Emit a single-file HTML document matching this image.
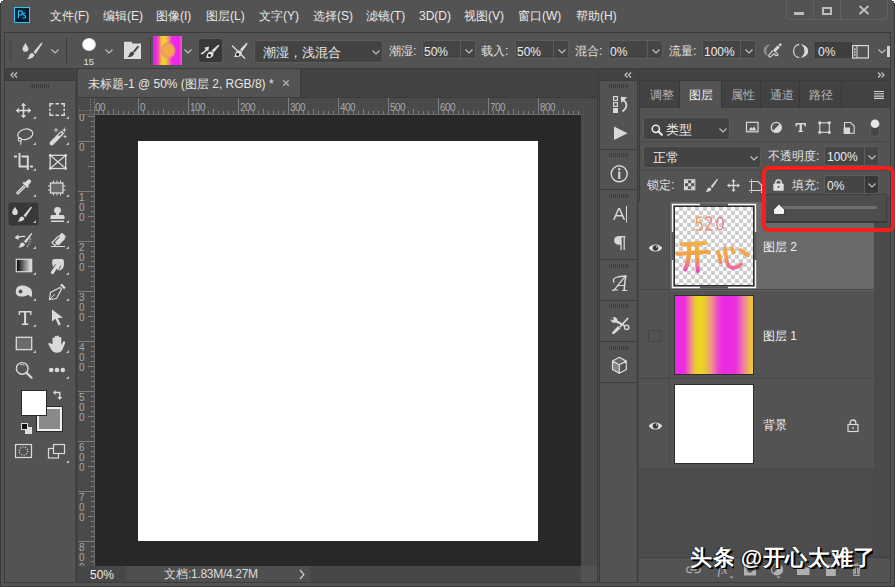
<!DOCTYPE html>
<html><head><meta charset="utf-8">
<style>
*{margin:0;padding:0;box-sizing:border-box}
html,body{width:895px;height:587px;overflow:hidden;background:#535353}
body{position:relative;font-family:"Liberation Sans",sans-serif;color:#e8e8e8;font-size:12px}
.a{position:absolute}
.t{position:absolute;white-space:nowrap;line-height:1}
svg{position:absolute;overflow:visible}
.c{display:inline-block;overflow:hidden;vertical-align:top;white-space:nowrap}
</style></head><body>

<!-- window frame -->
<div class="a" style="left:0;top:0;width:1px;height:587px;background:#3a3a3a"></div>
<div class="a" style="left:894px;top:0;width:1px;height:587px;background:#3a3a3a"></div>
<div class="a" style="left:0;top:586px;width:895px;height:1px;background:#3a3a3a"></div>
<div class="a" style="left:0;top:0;width:3px;height:1px;background:#fff"></div>
<div class="a" style="left:0;top:0;width:1px;height:3px;background:#fff"></div>
<div class="a" style="left:892px;top:0;width:3px;height:1px;background:#fff"></div>
<div class="a" style="left:894px;top:0;width:1px;height:3px;background:#fff"></div>

<!-- MENU BAR -->
<div class="a" style="left:14px;top:7px;width:16px;height:16px;background:#001e36;border:1px solid #31c5f4"></div>
<svg style="left:14px;top:7px" width="16" height="16" viewBox="0 0 16 16"><path d="M4.4 11.2 V3.9 H6.3 A2 2 0 0 1 6.3 8 H4.4" stroke="#31c5f4" stroke-width="1.1" fill="none"/><path d="M11.5 6.4 C10.5 5.7 8.8 5.9 8.9 7.2 C9 8.4 11.6 8.2 11.6 9.7 C11.6 11.2 9.6 11.4 8.6 10.6" stroke="#31c5f4" stroke-width="1.05" fill="none"/></svg>
<div class="t" style="left:50px;top:10px"><span class="c" style="width:2em">文件</span>(F)</div><div class="t" style="left:103px;top:10px"><span class="c" style="width:2em">编辑</span>(E)</div><div class="t" style="left:156px;top:10px"><span class="c" style="width:2em">图像</span>(I)</div><div class="t" style="left:206px;top:10px"><span class="c" style="width:2em">图层</span>(L)</div><div class="t" style="left:259px;top:10px"><span class="c" style="width:2em">文字</span>(Y)</div><div class="t" style="left:313px;top:10px"><span class="c" style="width:2em">选择</span>(S)</div><div class="t" style="left:366px;top:10px"><span class="c" style="width:2em">滤镜</span>(T)</div><div class="t" style="left:419px;top:10px">3D(D)</div><div class="t" style="left:464px;top:10px"><span class="c" style="width:2em">视图</span>(V)</div><div class="t" style="left:518px;top:10px"><span class="c" style="width:2em">窗口</span>(W)</div><div class="t" style="left:576px;top:10px"><span class="c" style="width:2em">帮助</span>(H)</div>

<!-- window buttons -->
<div class="a" style="left:786px;top:-2px;width:102px;height:22px;border:1px solid #626262;border-radius:0 0 4px 4px"></div>
<div class="a" style="left:813px;top:0;width:1px;height:19px;background:#626262"></div>
<div class="a" style="left:840px;top:0;width:1px;height:19px;background:#626262"></div>

<div class="a" style="left:794px;top:12px;width:10px;height:3px;background:#bdbdbd"></div>
<div class="a" style="left:822px;top:7px;width:10px;height:8px;border:2px solid #bdbdbd"></div>
<svg style="left:858px;top:5px" width="12" height="10" viewBox="0 0 12 10"><path d="M1.5 1 L10.5 9 M10.5 1 L1.5 9" stroke="#bdbdbd" stroke-width="2"/></svg>
<!-- OPTIONS BAR -->
<div class="a" style="left:4px;top:32px;width:887px;height:37px;border:1px solid #3b3b3b"></div>


<!-- grip -->
<div class="a" style="left:9px;top:41px;width:3px;height:20px;background:repeating-linear-gradient(#424242 0 1px,transparent 1px 2px)"></div>
<!-- brush tool icon -->
<svg style="left:22px;top:42px" width="22" height="18" viewBox="0 0 22 18">
<path d="M3.5 0.5 C4 3 6.5 4.5 6.5 6.8 A3 3 0 0 1 0.5 6.8 C0.5 4.5 3 3 3.5 0.5Z" fill="#d8d8d8"/>
<path d="M19.5 0.5 L11.5 10 L13.5 12 L20.5 1.5Z" fill="#d8d8d8"/>
<path d="M10.5 11 C8 11 7.5 13 7 14.5 C6.5 16 5.5 16.5 5 17 C8 17.5 11.5 16 12.5 13Z" fill="#d8d8d8"/>
</svg>
<svg style="left:51px;top:49px" width="8" height="5"><path d="M0.5 0.5 L4 4 L7.5 0.5" stroke="#c4c4c4" fill="none" stroke-width="1.1"/></svg>
<div class="a" style="left:66px;top:38px;width:1px;height:25px;background:#3c3c3c"></div>
<!-- brush size -->
<div class="a" style="left:81.5px;top:37.5px;width:14px;height:13px;border-radius:50%;background:radial-gradient(circle,#fff 55%,rgba(255,255,255,0.6) 75%,rgba(255,255,255,0) 100%)"></div>
<div class="t" style="left:83.5px;top:57px;font-size:9.5px;color:#e0e0e0">15</div>
<svg style="left:105px;top:49px" width="8" height="5"><path d="M0.5 0.5 L4 4 L7.5 0.5" stroke="#c4c4c4" fill="none" stroke-width="1.1"/></svg>
<!-- brush panel icon -->
<svg style="left:123px;top:41px" width="19" height="19" viewBox="123 41 19 19">
<path d="M124 41.8 H131.8 L132.3 43.6 H141 V59 H124Z" fill="#dcdcdc"/>
<path d="M137.6 45.8 A1 1 0 0 1 138.9 47 L134.6 52.6 L133 51.2Z" fill="#474747"/>
<path d="M132.6 51.6 L134.2 53 C134 55.5 131.5 57.3 127.3 57.2 C128.5 56.5 128.8 55.5 129.2 54.5 C129.8 53 130.8 51.8 132.6 51.6Z" fill="#474747"/>
</svg>
<div class="a" style="left:150px;top:37px;width:1px;height:26px;background:#3c3c3c"></div>
<!-- color swatch -->
<div class="a" style="left:153px;top:36px;width:29px;height:29px;background:linear-gradient(90deg,#ee22ee 0%,#ee22ee 10%,#ee60a0 20%,#eec830 30%,#eedd11 37%,#eec040 46%,#ee80a0 55%,#ee30e0 65%,#ee22ee 88%,#f060a8 100%)"></div>
<div class="a" style="left:160px;top:42px;width:16px;height:17px;border-radius:50%;background:radial-gradient(closest-side,#eeac48 0%,#eeaa48 55%,#ee9868 78%,rgba(238,130,140,0.6) 92%,rgba(238,130,140,0) 100%)"></div>
<svg style="left:184px;top:49px" width="8" height="5"><path d="M0.5 0.5 L4 4 L7.5 0.5" stroke="#c4c4c4" fill="none" stroke-width="1.1"/></svg>
<!-- pressed airbrush-angle toggle -->
<div class="a" style="left:198px;top:37.5px;width:25px;height:25.5px;background:#383838;border:1px solid #5a5a5a;border-radius:3px"></div>
<svg style="left:195px;top:35px" width="55" height="30" viewBox="195 35 55 30">
<g fill="#dedede">
<path d="M218.2 44.7 A1 1 0 0 1 219.3 45.8 L213.8 52.6 L211.6 50.6Z"/>
<path d="M213.2 52.2 C214 54.5 213 57.3 210.2 57.8 C208.5 58.1 207 57.8 206 58.3 C206.8 56.5 206.5 54 208.5 52.3 C210 51 212 51.2 213.2 52.2Z"/>
<path d="M209 46.6 L208.2 51.6 L204.2 47.8Z"/>
<path d="M246.6 42.8 A1 1 0 0 1 247.5 44 L242.2 51.6 L240 49.6Z"/>
<path d="M241.5 51.2 C242.3 53.5 241.3 56.3 238.5 56.8 C236.8 57.1 235.3 56.8 234.3 57.3 C235.1 55.5 234.8 53 236.8 51.3 C238.3 50 240.3 50.2 241.5 51.2Z"/>
</g>
<g fill="#111"><circle cx="209.5" cy="55.5" r="1.4"/><circle cx="237.7" cy="54.5" r="1.4"/></g>
<path d="M232 45.5 L245 58.5" stroke="#dedede" stroke-width="1.2"/>
<path d="M201.6 53.6 C203.5 53.3 204.8 51.8 206.5 49.5" stroke="#dedede" stroke-width="1.5" stroke-linecap="round" fill="none"/>
</svg>
<!-- mode dropdown -->
<div class="a" style="left:254px;top:40px;width:129px;height:23px;background:#434343;border:1px solid #5c5c5c;border-radius:3px"></div>
<div class="t" style="left:263px;top:46px;font-size:13px;color:#e6e6e6"><span class="c" style="width:6em">潮湿，浅混合</span></div>
<svg style="left:372px;top:50px" width="8" height="5"><path d="M0.5 0.5 L4 4 L7.5 0.5" stroke="#c4c4c4" fill="none" stroke-width="1.1"/></svg>
<div class="t" style="left:389px;top:45px;font-size:12px;color:#e0e0e0"><span class="c" style="width:2em">潮湿</span>:</div><div class="a" style="left:422px;top:40px;width:54px;height:19px;background:#454545;border:1px solid #5c5c5c;border-radius:3px"></div><div class="a" style="left:460px;top:41px;width:1px;height:17px;background:#5c5c5c"></div><div class="t" style="left:424px;top:46px;font-size:12px;color:#ececec">50%</div><svg style="left:465px;top:49px" width="8" height="5"><path d="M0.5 0.5 L4 4 L7.5 0.5" stroke="#c4c4c4" fill="none" stroke-width="1.1"/></svg><div class="t" style="left:481px;top:45px;font-size:12px;color:#e0e0e0"><span class="c" style="width:2em">载入</span>:</div><div class="a" style="left:515px;top:40px;width:54px;height:19px;background:#454545;border:1px solid #5c5c5c;border-radius:3px"></div><div class="a" style="left:553px;top:41px;width:1px;height:17px;background:#5c5c5c"></div><div class="t" style="left:517px;top:46px;font-size:12px;color:#ececec">50%</div><svg style="left:558px;top:49px" width="8" height="5"><path d="M0.5 0.5 L4 4 L7.5 0.5" stroke="#c4c4c4" fill="none" stroke-width="1.1"/></svg><div class="t" style="left:575px;top:45px;font-size:12px;color:#e0e0e0"><span class="c" style="width:2em">混合</span>:</div><div class="a" style="left:608px;top:40px;width:55px;height:19px;background:#454545;border:1px solid #5c5c5c;border-radius:3px"></div><div class="a" style="left:647px;top:41px;width:1px;height:17px;background:#5c5c5c"></div><div class="t" style="left:610px;top:46px;font-size:12px;color:#ececec">0%</div><svg style="left:652px;top:49px" width="8" height="5"><path d="M0.5 0.5 L4 4 L7.5 0.5" stroke="#c4c4c4" fill="none" stroke-width="1.1"/></svg><div class="t" style="left:669px;top:45px;font-size:12px;color:#e0e0e0"><span class="c" style="width:2em">流量</span>:</div><div class="a" style="left:702px;top:40px;width:54px;height:19px;background:#454545;border:1px solid #5c5c5c;border-radius:3px"></div><div class="a" style="left:740px;top:41px;width:1px;height:17px;background:#5c5c5c"></div><div class="t" style="left:704px;top:46px;font-size:12px;color:#ececec">100%</div><svg style="left:745px;top:49px" width="8" height="5"><path d="M0.5 0.5 L4 4 L7.5 0.5" stroke="#c4c4c4" fill="none" stroke-width="1.1"/></svg>
<!-- airbrush icon -->
<svg style="left:758px;top:40px" width="55" height="22" viewBox="758 40 55 22">
<path d="M771 44.2 C766 44.5 763.3 47.5 763.5 50.5 C763.7 53.5 766 55.5 768.6 56 C766.8 54.5 766.4 52.5 766.5 50.5 C766.6 48 768 45.5 771 44.2Z" fill="#8c8c8c"/>
<circle cx="780.2" cy="44.8" r="1.4" fill="#dadada"/>
<path d="M777.6 45.3 L779.8 47.3 L775.2 52.3 L773 50.3Z" fill="#dadada"/>
<path d="M773 50.3 L768.8 55.2 C768.6 56.2 769.4 57.2 770.6 56.8 L773.8 53.8 L776.3 55.8 L778.2 55 L776.5 52.5 L775.2 52.3" fill="none" stroke="#dadada" stroke-width="1.1" stroke-linejoin="round"/>
<path d="M799.2 44.3 A6.8 6.8 0 0 0 799.2 57.7" stroke="#dadada" stroke-width="1.2" fill="none"/>
<path d="M800.8 44.3 C805 44.8 808.2 47.5 808.2 51 C808.2 54.5 805 57.2 800.8 57.7 C803.5 55.5 804.4 53.5 804.4 51 C804.4 48.5 803.5 46 800.8 44.3Z" fill="#dadada"/>
</svg>
<div class="a" style="left:815px;top:42px;width:37px;height:16px;background:#3e3e3e;border-left:1px solid #383838"></div>
<div class="t" style="left:818px;top:46px;font-size:12px;color:#e8e8e8">0%</div>
<svg style="left:852px;top:45px" width="17" height="14" viewBox="0 0 17 14">
<rect x="0.6" y="0.6" width="15.8" height="12.4" fill="none" stroke="#dadada" stroke-width="1.2"/>
<path d="M5 0.6 V13" stroke="#dadada" stroke-width="1"/>
<rect x="2" y="3.5" width="1.6" height="1.6" fill="#dadada"/><rect x="2" y="6.3" width="1.6" height="1.6" fill="#dadada"/><rect x="2" y="9.1" width="1.6" height="1.6" fill="#dadada"/>
</svg>
<svg style="left:878px;top:49px" width="8" height="5"><path d="M0.5 0.5 L4 4 L7.5 0.5" stroke="#c4c4c4" fill="none" stroke-width="1.1"/></svg>
<div class="a" style="left:887px;top:46px;width:3px;height:11px;background:#d0d0d0"></div>

<!-- TOOLBAR PANEL -->
<div class="a" style="left:4px;top:68px;width:72px;height:515px;border:1px solid #3b3b3b;background:#535353"></div>
<div class="a" style="left:5px;top:69px;width:70px;height:11px;background:#424242"></div>
<div class="a" style="left:5px;top:80px;width:70px;height:1px;background:#3b3b3b"></div>


<!-- toolbar icons -->
<svg style="left:10px;top:72px" width="8" height="6" viewBox="0 0 8 6"><path d="M3.5 0.5 L1 3 L3.5 5.5 M7 0.5 L4.5 3 L7 5.5" stroke="#c8c8c8" stroke-width="1.2" fill="none"/></svg>
<div class="a" style="left:30px;top:84px;width:20px;height:4px;background:repeating-linear-gradient(90deg,#3c3c3c 0 1px,transparent 1px 2px)"></div>
<div class="a" style="left:8px;top:202px;width:31px;height:24px;background:#383838;border:1px solid #464646;border-radius:3px"></div>
<svg style="left:0;top:0" width="76" height="470" viewBox="0 0 76 470">
<g fill="#dadada" stroke="none">
<path d="M36 116 L36 119 L33 119Z" fill="#bdbdbd"/><path d="M69 116 L69 119 L66 119Z" fill="#bdbdbd"/><path d="M36 142 L36 145 L33 145Z" fill="#bdbdbd"/><path d="M69 142 L69 145 L66 145Z" fill="#bdbdbd"/><path d="M36 168 L36 171 L33 171Z" fill="#bdbdbd"/><path d="M36 194 L36 197 L33 197Z" fill="#bdbdbd"/><path d="M69 194 L69 197 L66 197Z" fill="#bdbdbd"/><path d="M36 220 L36 223 L33 223Z" fill="#bdbdbd"/><path d="M69 220 L69 223 L66 223Z" fill="#bdbdbd"/><path d="M36 246 L36 249 L33 249Z" fill="#bdbdbd"/><path d="M69 246 L69 249 L66 249Z" fill="#bdbdbd"/><path d="M36 272 L36 275 L33 275Z" fill="#bdbdbd"/><path d="M69 272 L69 275 L66 275Z" fill="#bdbdbd"/><path d="M36 298 L36 301 L33 301Z" fill="#bdbdbd"/><path d="M69 298 L69 301 L66 301Z" fill="#bdbdbd"/><path d="M36 324 L36 327 L33 327Z" fill="#bdbdbd"/><path d="M69 324 L69 327 L66 327Z" fill="#bdbdbd"/><path d="M36 350 L36 353 L33 353Z" fill="#bdbdbd"/><path d="M69 350 L69 353 L66 353Z" fill="#bdbdbd"/><path d="M69 376 L69 379 L66 379Z" fill="#bdbdbd"/><path d="M69 460 L69 463 L66 463Z" fill="#bdbdbd"/>
</g>
<g stroke="#dadada" fill="none" stroke-width="1.6">
<!-- move -->
<path d="M23.5 105 V116 M18 110.5 H29" stroke-width="1.5"/>
<!-- marquee -->
<path d="M50 107 V103.8 H53.5 M55.5 103.8 H59 M61 103.8 H64.2 V107 M64.2 108.5 V111 M64.2 112.5 V115.2 H61 M59 115.2 H55.5 M53.5 115.2 H50 V112.5 M50 111 V108.5" stroke-width="1.5"/>
<!-- lasso -->
<ellipse cx="25.3" cy="134.3" rx="7.6" ry="5.2" transform="rotate(-12 25.3 134.3)" stroke-width="1.2"/>
<circle cx="19.8" cy="139.6" r="1.7" stroke-width="1.1"/>
<path d="M20.5 141 C21.5 142.5 21 143.5 20.5 144.7" stroke-width="1.1"/>
<!-- crop -->
<path d="M14 156.5 H17 M19.5 153 V166.5 H29 M21.5 156.5 H27.8 V170 M30 166.5 H33" stroke-width="1.9"/>
<!-- frame -->
<rect x="50.2" y="155.3" width="15.5" height="13.2" stroke-width="1.3"/>
<path d="M50.2 155.3 L65.7 168.5 M65.7 155.3 L50.2 168.5" stroke-width="1.2"/>
<!-- eyedropper tube -->
<path d="M25.5 186.5 L18 194 A1.3 1.3 0 0 1 16.8 192.8 L24.3 185.3" stroke-width="1.3"/>
<!-- patch -->
<rect x="50.5" y="183" width="12.5" height="10" stroke-width="1.3" fill="#6a6a6a"/>
<path d="M48 186 H50.5 M48 190 H50.5 M63 186 H65.5 M63 190 H65.5 M53.5 180.5 V183 M57 180.5 V183 M60.5 180.5 V183 M53.5 193 V195.5 M57 193 V195.5 M60.5 193 V195.5" stroke-width="1"/>
<!-- zoom -->
<circle cx="22.2" cy="368.4" r="5.8" stroke-width="1.4"/>
<path d="M26.5 372.7 L31.5 377.7" stroke-width="2.2" stroke-linecap="round"/>
<path d="M20 365 A3.5 3.5 0 0 1 24.5 365.5" stroke-width="0.9"/>
<!-- rect tool -->
<rect x="16.3" y="337.3" width="15.4" height="12.3" stroke-width="1.3" fill="#6a6a6a"/>
<!-- eraser outline -->
<path d="M58.5 236 L52 242.5 L55 245.5 L61.5 239 M51 246.5 H65" stroke-width="1.2"/>
<!-- pen -->
<path d="M60 287.5 L50.5 292.5 L49.5 299.5 L56.5 298.5 L61.5 289Z" stroke-width="1.2"/>
<path d="M49.8 299.2 L55 294" stroke-width="1"/>
<!-- quick mask -->
<rect x="15.5" y="444.5" width="16" height="13" stroke-width="1.2"/>
<circle cx="23.5" cy="451" r="4.2" stroke-width="1.3" stroke-dasharray="1.1 1.5"/>
<!-- screen mode -->
<rect x="48.5" y="448.5" width="10" height="9.5" stroke-width="1.2"/>
<rect x="53.5" y="444.5" width="11" height="9" stroke-width="1.2" fill="#535353"/>
</g>
<g fill="#dadada">
<!-- move arrowheads -->
<path d="M23.5 102.8 L20.8 105.8 H26.2Z M23.5 118.2 L20.8 115.2 H26.2Z M15.8 110.5 L18.8 107.8 V113.2Z M31.2 110.5 L28.2 107.8 V113.2Z"/>
<!-- wand -->
<path d="M60 131.8 A1.9 1.9 0 0 1 63.2 134.8 L53.3 144.8 A2.1 2.1 0 0 1 50.2 141.7Z"/>
<path d="M58.3 135.3 L60.8 132.8 A0.6 0.6 0 0 1 61.8 133.8 L59.3 136.3Z" fill="#535353"/>
<path d="M56 126.8 L56.6 129.4 L59.2 130 L56.6 130.6 L56 133.2 L55.4 130.6 L52.8 130 L55.4 129.4Z"/>
<path d="M64.3 126.8 L64.9 129.4 L67.5 130 L64.9 130.6 L64.3 133.2 L63.7 130.6 L61.1 130 L63.7 129.4Z"/>
<path d="M65 134 L65.5 135.9 L67.3 136.4 L65.5 136.9 L65 138.8 L64.5 136.9 L62.7 136.4 L64.5 135.9Z"/>
<!-- eyedropper head -->
<path d="M24 184.5 L27.5 188 L29 186.5 L28 185.5 L30.5 183 A2 2 0 0 0 27.5 180 L25 182.5 L24 181.5 L22.5 183Z"/>
<!-- frame dots -->
<circle cx="50.2" cy="155.3" r="1.3"/><circle cx="65.7" cy="155.3" r="1.3"/><circle cx="50.2" cy="168.5" r="1.3"/><circle cx="65.7" cy="168.5" r="1.3"/>
<!-- brush (selected) -->
<path d="M15 206.5 C15.5 208.5 17.8 210 17.8 212.2 A2.8 2.8 0 0 1 12.2 212.2 C12.2 210 14.5 208.5 15 206.5Z"/>
<path d="M31 206.5 L23.5 215.5 L25.5 217.3 L32 207.5Z"/>
<path d="M22.5 216.5 C20 216.5 19.5 218.3 19.2 219.5 C18.9 220.5 18 221.2 17.5 221.5 C20.5 222 23.8 220.8 24.5 218.3Z"/>
<!-- stamp -->
<circle cx="57.5" cy="210.3" r="3.4"/>
<path d="M56 212.5 H59 V215 H63 A1.5 1.5 0 0 1 64.5 216.5 V219 H50.5 V216.5 A1.5 1.5 0 0 1 52 215 H56Z"/>
<rect x="51" y="220.5" width="13" height="1.5"/>
<!-- history brush -->
<path d="M31.5 232.8 L24 241.5 L26 243.3 L32.3 233.8Z"/>
<path d="M23 242.5 C20.5 242.5 20 244.3 19.7 245.5 C19.4 246.5 18.5 247.2 18 247.5 C21 248 24.3 246.8 25 244.3Z"/>
<path d="M14.5 237.5 L18.5 234.5 L18.5 236.5 C21 235.5 23.5 235.5 25.5 236 L25 237.2 C23 236.8 21 237 18.5 238 L18.5 240Z"/>
<circle cx="30.5" cy="239" r="0.7"/><circle cx="30" cy="241.5" r="0.7"/><circle cx="29" cy="244" r="0.7"/><circle cx="27.5" cy="246.3" r="0.7"/>
<!-- eraser top -->
<path d="M58.5 236 L61 233.5 A1.5 1.5 0 0 1 63 233.5 L65.3 235.8 A1.5 1.5 0 0 1 65.3 237.8 L58 245 L55 242 L61.5 239Z"/>
<path d="M55 242 L61.5 235.5 L65 239 L58.5 245.5Z"/>
<!-- smudge -->
<path d="M54.5 259 H61.8 C63.1 259 63.9 259.8 63.9 261.2 V264.8 C63.9 267.8 61.8 270.3 58.8 270.6 L56 268.5 C53.8 268 52.2 266 52.2 263.5 V261.3 C52.2 259.9 53.2 259 54.5 259Z"/>
<path d="M57.6 264.5 L52.4 272.6" stroke="#dadada" stroke-width="3.2" stroke-linecap="round"/>
<path d="M55.4 264.2 L53.6 267.6 M60.8 265.4 L58.8 269.6" stroke="#535353" stroke-width="0.9"/>
<!-- dodge -->
<path d="M21 285.5 C25 285 28.5 286.5 30.5 288.5 C32 290 32.3 292.5 32 295 L31.5 297.3 L28 294.8 C26 296.5 22 297 19 296.3 C16.5 295.7 15.5 293.5 15.8 291 C16 288 17.5 286 21 285.5Z"/>
<!-- pen nib top -->
<path d="M60 285 L62 283.8 L65.5 287.3 L64.3 289.5Z"/>
<!-- type T -->
<path d="M18.7 311 H31.5 V315 H30.2 V312.6 H26.1 V323.4 H28.3 V325 H21.9 V323.4 H24.1 V312.6 H20 V315 H18.7Z"/>
<!-- arrow -->
<path d="M52 309.4 L52 321.5 L55.5 318.8 L58.5 325.5 L60.8 324.4 L57.8 318 L63 317.8Z"/>
<!-- hand -->
<path d="M52.5 344 V338.5 A1.1 1.1 0 0 1 54.7 338.5 V343 V336.8 A1.1 1.1 0 0 1 56.9 336.8 V343 V336.5 A1.1 1.1 0 0 1 59.1 336.5 V343 V338 A1.1 1.1 0 0 1 61.3 338 V345 L63 342 A1.2 1.2 0 0 1 65.2 343 L62.5 349.5 C61.5 351.8 59.5 352.8 57 352.8 C54 352.8 52 351 51 349 L48.5 344.5 A1.1 1.1 0 0 1 50.5 343.5Z"/>
<!-- dots -->
<circle cx="51.2" cy="370" r="2.3"/><circle cx="57" cy="370" r="2.3"/><circle cx="62.8" cy="370" r="2.3"/>
<!-- swap arrows -->
<path d="M53 392.5 L55.5 390 V391.8 H60.5 V397 H62.3 L59.8 400 L57.3 397 H59.1 V393.2 H55.5 V395Z"/>
</g>
<!-- dodge hole -->
<circle cx="20.5" cy="291.5" r="2" fill="#535353"/>
<path d="M55.5 296 L58.5 292" stroke="#535353" stroke-width="0"/>
<!-- gradient -->
<defs><linearGradient id="gr" x1="0" x2="1"><stop offset="0" stop-color="#000"/><stop offset="1" stop-color="#eee"/></linearGradient></defs>
<rect x="16.3" y="259.3" width="15.4" height="12.4" fill="url(#gr)" stroke="#dadada" stroke-width="1.2"/>
</svg>
<!-- FG / BG colors -->
<div class="a" style="left:37px;top:406.5px;width:24.5px;height:24.5px;background:#8a8a8a;border:2px solid #f0f0f0;outline:1px solid #2a2a2a"></div>
<div class="a" style="left:21px;top:390px;width:26px;height:26px;background:#fff;border:1px solid #2a2a2a"></div>
<div class="a" style="left:25px;top:427px;width:7px;height:7px;background:#ddd"></div>
<div class="a" style="left:21px;top:423px;width:7px;height:7px;background:#111;border:1px solid #ddd"></div>

<!-- DOC AREA -->
<div class="a" style="left:75px;top:68px;width:1px;height:515px;background:#474747"></div>
<div class="a" style="left:76px;top:68px;width:522px;height:515px;border:1px solid #3b3b3b;background:#4b4b4b"></div>
<div class="a" style="left:77px;top:69px;width:1px;height:513px;background:#444"></div>
<div class="a" style="left:598px;top:68px;width:1px;height:515px;background:#4a4a4a"></div>
<div class="a" style="left:581px;top:566px;width:16px;height:16px;background:#525252"></div>
<div class="a" style="left:78px;top:69px;width:519px;height:28px;background:#424242"></div>
<div class="a" style="left:78px;top:69px;width:222px;height:28px;background:#535353"></div>
<div class="a" style="left:77px;top:97px;width:520px;height:1px;background:#3b3b3b"></div>
<!-- rulers -->
<div class="a" style="left:78px;top:98px;width:503px;height:17px;background:#4a4a4a"></div>
<div class="a" style="left:78px;top:98px;width:17px;height:468px;background:#4a4a4a"></div>
<div class="a" style="left:95px;top:115px;width:486px;height:451px;background:#282828"></div>
<div class="a" style="left:138px;top:141px;width:400px;height:400px;background:#fff"></div>
<svg style="left:0;top:0" width="600" height="587" viewBox="0 0 600 587">
<path d="M98.5 111 V114 M103.5 111 V114 M108.5 111 V114 M113.5 109 V114 M118.5 111 V114 M123.5 111 V114 M128.5 111 V114 M133.5 111 V114 M138.5 98 V114 M143.5 111 V114 M148.5 111 V114 M153.5 111 V114 M158.5 111 V114 M163.5 109 V114 M168.5 111 V114 M173.5 111 V114 M178.5 111 V114 M183.5 111 V114 M188.5 98 V114 M193.5 111 V114 M198.5 111 V114 M203.5 111 V114 M208.5 111 V114 M213.5 109 V114 M218.5 111 V114 M223.5 111 V114 M228.5 111 V114 M233.5 111 V114 M238.5 98 V114 M243.5 111 V114 M248.5 111 V114 M253.5 111 V114 M258.5 111 V114 M263.5 109 V114 M268.5 111 V114 M273.5 111 V114 M278.5 111 V114 M283.5 111 V114 M288.5 98 V114 M293.5 111 V114 M298.5 111 V114 M303.5 111 V114 M308.5 111 V114 M313.5 109 V114 M318.5 111 V114 M323.5 111 V114 M328.5 111 V114 M333.5 111 V114 M338.5 98 V114 M343.5 111 V114 M348.5 111 V114 M353.5 111 V114 M358.5 111 V114 M363.5 109 V114 M368.5 111 V114 M373.5 111 V114 M378.5 111 V114 M383.5 111 V114 M388.5 98 V114 M393.5 111 V114 M398.5 111 V114 M403.5 111 V114 M408.5 111 V114 M413.5 109 V114 M418.5 111 V114 M423.5 111 V114 M428.5 111 V114 M433.5 111 V114 M438.5 98 V114 M443.5 111 V114 M448.5 111 V114 M453.5 111 V114 M458.5 111 V114 M463.5 109 V114 M468.5 111 V114 M473.5 111 V114 M478.5 111 V114 M483.5 111 V114 M488.5 98 V114 M493.5 111 V114 M498.5 111 V114 M503.5 111 V114 M508.5 111 V114 M513.5 109 V114 M518.5 111 V114 M523.5 111 V114 M528.5 111 V114 M533.5 111 V114 M538.5 98 V114 M543.5 111 V114 M548.5 111 V114 M553.5 111 V114 M558.5 111 V114 M563.5 109 V114 M568.5 111 V114 M573.5 111 V114 M578.5 111 V114" stroke="#7e7e7e" stroke-width="1"/>
<path d="M88 116.5 H94 M91 121.5 H94 M91 126.5 H94 M91 131.5 H94 M91 136.5 H94 M78 141.5 H94 M91 146.5 H94 M91 151.5 H94 M91 156.5 H94 M91 161.5 H94 M88 166.5 H94 M91 171.5 H94 M91 176.5 H94 M91 181.5 H94 M91 186.5 H94 M78 191.5 H94 M91 196.5 H94 M91 201.5 H94 M91 206.5 H94 M91 211.5 H94 M88 216.5 H94 M91 221.5 H94 M91 226.5 H94 M91 231.5 H94 M91 236.5 H94 M78 241.5 H94 M91 246.5 H94 M91 251.5 H94 M91 256.5 H94 M91 261.5 H94 M88 266.5 H94 M91 271.5 H94 M91 276.5 H94 M91 281.5 H94 M91 286.5 H94 M78 291.5 H94 M91 296.5 H94 M91 301.5 H94 M91 306.5 H94 M91 311.5 H94 M88 316.5 H94 M91 321.5 H94 M91 326.5 H94 M91 331.5 H94 M91 336.5 H94 M78 341.5 H94 M91 346.5 H94 M91 351.5 H94 M91 356.5 H94 M91 361.5 H94 M88 366.5 H94 M91 371.5 H94 M91 376.5 H94 M91 381.5 H94 M91 386.5 H94 M78 391.5 H94 M91 396.5 H94 M91 401.5 H94 M91 406.5 H94 M91 411.5 H94 M88 416.5 H94 M91 421.5 H94 M91 426.5 H94 M91 431.5 H94 M91 436.5 H94 M78 441.5 H94 M91 446.5 H94 M91 451.5 H94 M91 456.5 H94 M91 461.5 H94 M88 466.5 H94 M91 471.5 H94 M91 476.5 H94 M91 481.5 H94 M91 486.5 H94 M78 491.5 H94 M91 496.5 H94 M91 501.5 H94 M91 506.5 H94 M91 511.5 H94 M88 516.5 H94 M91 521.5 H94 M91 526.5 H94 M91 531.5 H94 M91 536.5 H94 M78 541.5 H94 M91 546.5 H94 M91 551.5 H94 M91 556.5 H94 M91 561.5 H94" stroke="#7e7e7e" stroke-width="1"/>
<rect x="78" y="114" width="503" height="1" fill="#6a6a6a"/>
<rect x="94" y="98" width="1" height="468" fill="#6a6a6a"/>
<defs><clipPath id="rclip"><rect x="78" y="98" width="503" height="468"/></clipPath></defs><g font-family="Liberation Sans" font-size="10" fill="#a8a8a8" letter-spacing="-0.6" clip-path="url(#rclip)"><text x="90" y="110.5">100</text><text x="140" y="110.5">0</text><text x="190" y="110.5">100</text><text x="240" y="110.5">200</text><text x="290" y="110.5">300</text><text x="340" y="110.5">400</text><text x="390" y="110.5">500</text><text x="440" y="110.5">600</text><text x="490" y="110.5">700</text><text x="540" y="110.5">800</text><text x="79" y="121.0">0</text><text x="79" y="150.8">0</text><text x="79" y="200.8">1</text><text x="79" y="210.9">0</text><text x="79" y="221.0">0</text><text x="79" y="250.8">2</text><text x="79" y="260.9">0</text><text x="79" y="271.0">0</text><text x="79" y="300.8">3</text><text x="79" y="310.9">0</text><text x="79" y="321.0">0</text><text x="79" y="350.8">4</text><text x="79" y="360.9">0</text><text x="79" y="371.0">0</text><text x="79" y="400.8">5</text><text x="79" y="410.9">0</text><text x="79" y="421.0">0</text><text x="79" y="450.8">6</text><text x="79" y="460.9">0</text><text x="79" y="471.0">0</text><text x="79" y="500.8">7</text><text x="79" y="510.9">0</text><text x="79" y="521.0">0</text><text x="79" y="550.8">8</text><text x="79" y="560.9">0</text><text x="79" y="571.0">0</text></g>
</svg>
<!-- ruler corner -->
<div class="a" style="left:78px;top:98px;width:16px;height:16px;background:#4a4a4a"></div>
<svg style="left:78px;top:98px" width="16" height="16" viewBox="0 0 16 16"><path d="M1 12.5 H15 M12.5 1 V15" stroke="#8a8a8a" stroke-width="1" stroke-dasharray="1 1.5"/></svg>

<!-- status bar -->
<div class="a" style="left:78px;top:566px;width:503px;height:16px;background:#474747"></div>
<div class="a" style="left:126px;top:566px;width:184px;height:16px;background:#4f4f4f"></div>

<div class="t" style="left:88px;top:78px;font-size:12px;color:#e6e6e6"><span class="c" style="width:3em">未标题</span>-1 @ 50% (<span class="c" style="width:2em">图层</span> 2, RGB/8) *</div>
<svg style="left:282px;top:79px" width="8" height="8" viewBox="0 0 8 8"><path d="M1.2 1.2 L6.8 6.8 M6.8 1.2 L1.2 6.8" stroke="#a8a8a8" stroke-width="1.6"/></svg>
<div class="a" style="left:300px;top:69px;width:1px;height:28px;background:#3b3b3b"></div>
<div class="t" style="left:90px;top:569px;font-size:12px;color:#ececec">50%</div>
<div class="t" style="left:164px;top:568px;font-size:12px;letter-spacing:-0.3px;color:#dcdcdc"><span class="c" style="width:2em">文档</span>:1.83M/4.27M</div>
<svg style="left:299px;top:569px" width="6" height="11" viewBox="0 0 6 11"><path d="M1 1 L5 5.5 L1 10" stroke="#d0d0d0" stroke-width="1.2" fill="none"/></svg>

<!-- STRIP -->
<div class="a" style="left:599px;top:68px;width:39px;height:515px;border:1px solid #3b3b3b;background:#535353"></div>
<div class="a" style="left:600px;top:69px;width:37px;height:11px;background:#424242"></div>


<svg style="left:624px;top:72px" width="8" height="6" viewBox="0 0 8 6"><path d="M3.5 0.5 L1 3 L3.5 5.5 M7 0.5 L4.5 3 L7 5.5" stroke="#c8c8c8" stroke-width="1.2" fill="none"/></svg>
<div class="a" style="left:600px;top:80px;width:37px;height:1px;background:#3b3b3b"></div><div class="a" style="left:600px;top:149px;width:37px;height:1px;background:#3b3b3b"></div><div class="a" style="left:600px;top:189px;width:37px;height:1px;background:#3b3b3b"></div><div class="a" style="left:600px;top:259px;width:37px;height:1px;background:#3b3b3b"></div><div class="a" style="left:600px;top:300px;width:37px;height:1px;background:#3b3b3b"></div><div class="a" style="left:600px;top:341px;width:37px;height:1px;background:#3b3b3b"></div><div class="a" style="left:600px;top:382px;width:37px;height:1px;background:#3b3b3b"></div>

<div class="a" style="left:609px;top:84px;width:20px;height:4px;background:repeating-linear-gradient(90deg,#3c3c3c 0 1px,transparent 1px 2px)"></div><div class="a" style="left:609px;top:153px;width:20px;height:4px;background:repeating-linear-gradient(90deg,#3c3c3c 0 1px,transparent 1px 2px)"></div><div class="a" style="left:609px;top:194px;width:20px;height:4px;background:repeating-linear-gradient(90deg,#3c3c3c 0 1px,transparent 1px 2px)"></div><div class="a" style="left:609px;top:264px;width:20px;height:4px;background:repeating-linear-gradient(90deg,#3c3c3c 0 1px,transparent 1px 2px)"></div><div class="a" style="left:609px;top:304px;width:20px;height:4px;background:repeating-linear-gradient(90deg,#3c3c3c 0 1px,transparent 1px 2px)"></div><div class="a" style="left:609px;top:346px;width:20px;height:4px;background:repeating-linear-gradient(90deg,#3c3c3c 0 1px,transparent 1px 2px)"></div>
<svg style="left:598px;top:80px" width="40" height="310" viewBox="598 80 40 310">
<g fill="none" stroke="#d8d8d8">
<rect x="613.6" y="96.6" width="3.8" height="3.8" stroke-width="1.2"/>
<rect x="613.6" y="102.6" width="3.8" height="3.8" stroke-width="1.2"/>
<path d="M623.2 100.2 C627.5 102.5 627.8 107.5 622.5 111.5" stroke-width="1.7"/>
<circle cx="619.2" cy="173.8" r="8" stroke-width="1.4"/>
<path d="M626.5 206 V222.5" stroke-width="1"/>
<path d="M621 236 V250 M624.2 236 V250 M619 236.6 H625.5" stroke-width="1.3"/>

</g>
<g fill="#d8d8d8">
<rect x="613" y="108" width="5" height="5"/>
<path d="M620.8 96.8 L627.2 97.3 L621.2 103Z"/>
<path d="M614 126.5 L627.6 133.3 L614 140Z"/>
<circle cx="619.2" cy="169.2" r="1.2"/>
<rect x="618.2" y="171.5" width="2.1" height="7.5"/>
<path d="M613 219.8 L618.2 208 H620 L625.2 219.8 H623.5 L622.1 216.5 H616.1 L614.7 219.8Z M616.7 215 H621.5 L619.1 209.5Z" fill-rule="evenodd"/>
<path d="M621 236 H619 A4.9 4.4 0 0 0 619 244.8 H621Z"/>
<path d="M612.8 361.3 L619.3 364.8 V373 L612.8 369.3Z" fill="#858585"/>
<path d="M619.3 357.5 L626.2 361.2 L619.3 364.8 L612.8 361.3Z" fill="#656565"/>
<path d="M619.3 357.3 L626.3 361.1 V369.4 L619.3 373.3 L612.5 369.4 V361.1Z M612.5 361.1 L619.3 364.7 L626.3 361.1 M619.3 364.7 V373.3" fill="none" stroke="#dedede" stroke-width="1.2" stroke-linejoin="round"/>
<!-- tools -->
<path d="M610.5 319 C610.5 322 613 323.5 616 322.5 L624 326.5 L625 325 L617.5 320.5 C617.5 318 615.5 316.5 612.5 317 L614 319 L612.5 320.5Z"/>
<circle cx="626.7" cy="327.3" r="2.2" fill="none" stroke="#d8d8d8" stroke-width="1.4"/>
<path d="M612 332.5 L618 326 L620.5 328.5 L614 334 A1.4 1.4 0 0 1 612 332.5Z"/>
<path d="M619 326.8 L627.5 317.5 L628.8 318.6 L620.2 327.8Z"/>
</g>
<g fill="none" stroke="#d8d8d8" stroke-linecap="round">
<path d="M614 282 C612.5 280.5 613.5 278.5 616 277.5 C619 276.5 622.5 276.2 625.8 276" stroke-width="1.3"/>
<path d="M625.8 276 C621 281 617 286.5 614.2 290" stroke-width="1.2"/>
<path d="M625.8 276 C625 280 624.5 285 624.2 290" stroke-width="1.5"/>
<path d="M617.5 285.5 H624.2" stroke-width="1"/>
<path d="M612.5 290.5 C614 289.5 616 289.5 617.3 290" stroke-width="1.3"/>
<path d="M622.5 290.5 H627" stroke-width="1.2"/>
</g>
</svg>

<!-- LAYERS PANEL -->
<div class="a" style="left:638px;top:68px;width:1px;height:515px;background:#4a4a4a"></div>
<div class="a" style="left:639px;top:68px;width:252px;height:515px;border:1px solid #3b3b3b;background:#535353"></div>
<div class="a" style="left:640px;top:69px;width:250px;height:11px;background:#424242"></div>
<div class="a" style="left:640px;top:80px;width:250px;height:1px;background:#3b3b3b"></div>
<svg style="left:877px;top:72px" width="8" height="6" viewBox="0 0 8 6"><path d="M1 0.5 L3.5 3 L1 5.5 M4.5 0.5 L7 3 L4.5 5.5" stroke="#c8c8c8" stroke-width="1.2" fill="none"/></svg>
<!-- tabs -->
<div class="a" style="left:640px;top:81px;width:250px;height:27px;background:#424242"></div>
<div class="a" style="left:680px;top:81px;width:41px;height:28px;background:#535353"></div>
<div class="a" style="left:679px;top:81px;width:1px;height:27px;background:#383838"></div>
<div class="a" style="left:721px;top:81px;width:1px;height:27px;background:#383838"></div>
<div class="a" style="left:760px;top:81px;width:1px;height:27px;background:#383838"></div>
<div class="a" style="left:799px;top:81px;width:1px;height:27px;background:#383838"></div>
<div class="a" style="left:841px;top:81px;width:1px;height:27px;background:#383838"></div>
<div class="t" style="left:650px;top:89px;font-size:12px;color:#b4b4b4"><span class="c" style="width:2em">调整</span></div>
<div class="t" style="left:689px;top:89px;font-size:12px;color:#f0f0f0"><span class="c" style="width:2em">图层</span></div>
<div class="t" style="left:731px;top:89px;font-size:12px;color:#b4b4b4"><span class="c" style="width:2em">属性</span></div>
<div class="t" style="left:770px;top:89px;font-size:12px;color:#b4b4b4"><span class="c" style="width:2em">通道</span></div>
<div class="t" style="left:809px;top:89px;font-size:12px;color:#b4b4b4"><span class="c" style="width:2em">路径</span></div>
<svg style="left:874px;top:90px" width="11" height="10" viewBox="0 0 11 10"><path d="M0 1.5 H10 M0 3.8 H10 M0 6.1 H10 M0 8.4 H10" stroke="#cfcfcf" stroke-width="1.1"/></svg>
<!-- filter row -->
<div class="a" style="left:643px;top:117px;width:87px;height:23px;background:#434343;border:1px solid #5a5a5a;border-radius:3px"></div>
<svg style="left:651px;top:124px" width="12" height="12" viewBox="0 0 12 12"><circle cx="4.8" cy="4.8" r="3.6" stroke="#e8e8e8" stroke-width="1.6" fill="none"/><path d="M7.5 7.5 L10.8 10.8" stroke="#e8e8e8" stroke-width="2.2" stroke-linecap="round"/></svg>
<div class="t" style="left:666px;top:123px;font-size:13px;color:#ececec"><span class="c" style="width:2em">类型</span></div>
<svg style="left:719px;top:128px" width="8" height="5"><path d="M0.5 0.5 L4 4 L7.5 0.5" stroke="#c4c4c4" fill="none" stroke-width="1.1"/></svg>
<svg style="left:740px;top:115px" width="145" height="25" viewBox="740 115 145 25">
<g fill="none" stroke="#d8d8d8">
<rect x="746.5" y="122.3" width="11.5" height="9.5" stroke-width="1.2"/>
<circle cx="776.3" cy="127.4" r="5" stroke-width="1.3"/>
<rect x="819.8" y="122.8" width="9.5" height="9.5" stroke-width="1.1"/>
<path d="M844.5 122.5 H850.5 L854.2 126 V133.3 H844.5Z" stroke-width="1.1"/>
</g>
<g fill="#d8d8d8">
<path d="M748.5 130.5 L751 127 L752.5 128.5 L754 126.5 L756.5 130.5Z"/>
<path d="M779.9 123.8 A5 5 0 0 1 772.7 131Z"/>
<path d="M795.6 122.9 H805.9 V126.5 H804.8 L804.2 124.6 H801.9 V130.8 L803.3 131.2 V132.1 H798.2 V131.2 L799.6 130.8 V124.6 H797.3 L796.7 126.5 H795.6Z"/>
<circle cx="819.8" cy="122.8" r="1.6"/><circle cx="829.3" cy="122.8" r="1.6"/><circle cx="819.8" cy="132.3" r="1.6"/><circle cx="829.3" cy="132.3" r="1.6"/>
<rect x="843.6" y="127.5" width="6.5" height="6.5"/>
</g>
<rect x="870.5" y="119.5" width="9" height="17" rx="4.5" fill="#474747" stroke="#5c5c5c" stroke-width="1"/>
<circle cx="875" cy="123.8" r="4.3" fill="#e6e6e6"/>
</svg>
<div class="a" style="left:639px;top:141px;width:251px;height:1px;background:#4a4a4a"></div>
<!-- blend row -->
<div class="a" style="left:643px;top:146px;width:118px;height:22px;background:#434343;border:1px solid #5a5a5a;border-radius:3px"></div>
<div class="t" style="left:653px;top:151px;font-size:13px;color:#ececec"><span class="c" style="width:2em">正常</span></div>
<svg style="left:750px;top:156px" width="8" height="5"><path d="M0.5 0.5 L4 4 L7.5 0.5" stroke="#c4c4c4" fill="none" stroke-width="1.1"/></svg>
<div class="t" style="left:768px;top:150px;font-size:12px;color:#e0e0e0"><span class="c" style="width:4em">不透明度</span>:</div>
<div class="a" style="left:824px;top:146px;width:55px;height:20px;background:#454545;border:1px solid #5c5c5c;border-radius:3px"></div>
<div class="a" style="left:864px;top:147px;width:1px;height:18px;background:#5c5c5c"></div>
<div class="t" style="left:827px;top:151px;font-size:12px;color:#ececec">100%</div>
<svg style="left:868px;top:155px" width="8" height="5"><path d="M0.5 0.5 L4 4 L7.5 0.5" stroke="#c4c4c4" fill="none" stroke-width="1.1"/></svg>
<div class="a" style="left:639px;top:170px;width:251px;height:1px;background:#4a4a4a"></div>
<!-- lock row -->
<div class="t" style="left:647px;top:179px;font-size:12px;color:#e0e0e0"><span class="c" style="width:2em">锁定</span>:</div>
<svg style="left:680px;top:176px" width="90" height="18" viewBox="680 176 90 18">
<rect x="684.5" y="179.7" width="10.3" height="10" fill="none" stroke="#d8d8d8" stroke-width="1.1"/>
<g fill="#d8d8d8"><rect x="685" y="180.2" width="3.1" height="3"/><rect x="691.2" y="180.2" width="3.1" height="3"/><rect x="688.1" y="183.2" width="3.1" height="3"/><rect x="685" y="186.2" width="3.1" height="3"/><rect x="691.2" y="186.2" width="3.1" height="3"/>
<g transform="translate(705.5 178.8) scale(0.86) translate(-17.5 -206.5)"><path d="M31 206.5 L23.5 215.5 L25.5 217.3 L32 207.5Z"/><path d="M22.5 216.5 C20 216.5 19.5 218.3 19.2 219.5 C18.9 220.5 18 221.2 17.5 221.5 C20.5 222 23.8 220.8 24.5 218.3Z"/></g>
<path d="M733.5 179 L731.3 181.5 H735.7Z M733.5 192 L731.3 189.5 H735.7Z M727 185.5 L729.5 183.3 V187.7Z M740 185.5 L737.5 183.3 V187.7Z"/>
</g>
<path d="M733.5 181 V190 M729 185.5 H738" stroke="#d8d8d8" stroke-width="1.3"/>
<path d="M751.5 181.5 H758 L761.5 185 V190.5 H751.5Z" stroke="#d8d8d8" stroke-width="1.1" fill="none"/><path d="M751.5 179 V180.5 M749 181.5 H750.5 M749 190.5 H750.5 M751.5 191.5 V193 M761.5 191.5 V193 M762.5 190.5 H764" stroke="#d8d8d8" stroke-width="1"/>
</svg>
<!-- lock (fill) -->
<svg style="left:773px;top:179px" width="11" height="12" viewBox="0 0 11 12"><path d="M2.8 5 V3.6 A2.7 2.7 0 0 1 8.2 3.6 V5" stroke="#dedede" stroke-width="1.5" fill="none"/><rect x="0.3" y="4.4" width="10.4" height="7.4" rx="0.8" fill="#dedede"/><circle cx="5.5" cy="8" r="1" fill="#535353"/></svg>
<div class="t" style="left:792px;top:179px;font-size:12px;color:#e0e0e0"><span class="c" style="width:2em">填充</span>:</div>
<div class="a" style="left:824px;top:175px;width:55px;height:19px;background:#454545;border:1px solid #5c5c5c;border-radius:3px"></div>
<div class="a" style="left:864px;top:176px;width:14px;height:17px;background:#383838;border-radius:0 2px 2px 0"></div>
<div class="a" style="left:864px;top:176px;width:1px;height:17px;background:#5c5c5c"></div>
<div class="t" style="left:827px;top:180px;font-size:12px;color:#ececec">0%</div>
<svg style="left:868px;top:183px" width="8" height="5"><path d="M0.5 0.5 L4 4 L7.5 0.5" stroke="#c4c4c4" fill="none" stroke-width="1.1"/></svg>
<!-- layers list -->
<div class="a" style="left:639px;top:202px;width:235px;height:266px;background:#535353"></div>
<div class="a" style="left:639px;top:468px;width:235px;height:89px;background:#4c4c4c"></div>
<div class="a" style="left:874px;top:196px;width:16px;height:361px;background:#4a4a4a"></div>
<div class="a" style="left:670px;top:202px;width:204px;height:87px;background:#6a6a6a"></div>
<div class="a" style="left:669px;top:202px;width:1px;height:266px;background:#4a4a4a"></div>
<div class="a" style="left:639px;top:289px;width:235px;height:1px;background:#454545"></div>
<div class="a" style="left:670px;top:290px;width:204px;height:1px;background:#5f5f5f"></div>
<div class="a" style="left:639px;top:378px;width:235px;height:1px;background:#454545"></div>
<div class="a" style="left:670px;top:379px;width:204px;height:1px;background:#5a5a5a"></div>
<div class="a" style="left:639px;top:468px;width:235px;height:1px;background:#474747"></div>
<!-- footer -->
<div class="a" style="left:639px;top:557px;width:251px;height:1px;background:#3f3f3f"></div>
<div class="a" style="left:639px;top:558px;width:251px;height:24px;background:#535353"></div>

<!-- row 2 -->
<svg style="left:648px;top:243px" width="15" height="10" viewBox="0 0 15 10"><path d="M0.8 5 C3.5 0.3 11.5 0.3 14.2 5 C11.5 9.7 3.5 9.7 0.8 5Z" fill="#e2e2e2"/><circle cx="7.5" cy="5" r="2.8" fill="#3a3a3a"/><circle cx="8.6" cy="3.9" r="0.75" fill="#e2e2e2"/></svg>
<div class="a" style="left:672px;top:204px;width:84px;height:84px;background:#5a5a5a"></div>
<div class="a" style="left:674px;top:206px;width:80px;height:80px;border:1px solid #2e2e2e;background:conic-gradient(#cdcdcd 25%,#fff 0 50%,#cdcdcd 0 75%,#fff 0) 0 0/8px 8px"></div>
<svg style="left:671px;top:203px" width="86" height="86" viewBox="671 203 86 86">
<path d="M672.5 232 V204.5 H700 M728 204.5 H755.5 V232 M755.5 260 V287.5 H728 M700 287.5 H672.5 V260" stroke="#f6f6f6" stroke-width="1.3" fill="none"/>
<defs>
<linearGradient id="kx" gradientUnits="userSpaceOnUse" x1="0" y1="242" x2="0" y2="273"><stop offset="0" stop-color="#f4b048"/><stop offset="0.5" stop-color="#f2a048"/><stop offset="0.8" stop-color="#ee7090"/><stop offset="1" stop-color="#e838d8"/></linearGradient>
<linearGradient id="kn" gradientUnits="userSpaceOnUse" x1="695" y1="0" x2="724" y2="0"><stop offset="0" stop-color="#f2a050"/><stop offset="1" stop-color="#f070a0"/></linearGradient>
</defs>
<g stroke="url(#kx)" stroke-linecap="round" fill="none">
<path d="M681.5 244.3 C690 243.8 700 243.3 705.5 243" stroke-width="4"/>
<path d="M677.8 254 C688 253 700 252.3 708.5 251.8" stroke-width="4.2"/>
<path d="M689 245.5 C689.5 253 689 261 685.3 269.3" stroke-width="4.4"/>
<path d="M696.8 245.5 C697 254 697.3 262 697.8 271" stroke-width="4.2"/>
<path d="M718 251.5 C719 255 720 258.5 720.5 262" stroke-width="3.8"/>
<path d="M725 248.5 C726 255 726 261.5 728.5 266 C732 268.5 737 268 741 264.5" stroke-width="3.8"/>
<path d="M731.5 247.8 L734 252.3" stroke-width="3.6"/>
<path d="M740.5 250 L747.8 255.3" stroke-width="3.8"/>
</g>
<g stroke="url(#kn)" stroke-width="1.5" fill="none" stroke-linecap="round" stroke-linejoin="round">
<path d="M702 217.3 H697 L696.3 222.8 C699 221.8 702 222.5 702 226 C702 229.5 698.5 230.8 695.8 229.5"/>
<path d="M705.3 219.8 C706 217.5 708 216.8 709.5 217 C711.5 217.5 712.2 219.8 711 222 L705.5 230 H712.3"/>
<ellipse cx="720" cy="223.5" rx="3.2" ry="6.3"/>
</g>
</svg>
<div class="t" style="left:763px;top:241px;font-size:12px;color:#f0f0f0"><span class="c" style="width:2em">图层</span> 2</div>
<!-- row 1 -->
<div class="a" style="left:648px;top:330px;width:13px;height:12px;border:1px solid #454545"></div>
<div class="a" style="left:674px;top:295px;width:80px;height:80px;border:1px solid #2e2e2e;background:linear-gradient(90deg,#ea28e4 0%,#ea2ce0 12%,#ee8890 20%,#e8cc30 26%,#e8d820 32%,#eac830 38%,#ee9a80 46%,#ea48d0 55%,#ea28e4 62%,#ea30e0 78%,#ee80a0 88%,#eec040 96%,#eec840 100%)"></div>
<div class="t" style="left:763px;top:330px;font-size:12px;color:#f0f0f0"><span class="c" style="width:2em">图层</span> 1</div>
<!-- background row -->
<svg style="left:648px;top:421px" width="15" height="10" viewBox="0 0 15 10"><path d="M0.8 5 C3.5 0.3 11.5 0.3 14.2 5 C11.5 9.7 3.5 9.7 0.8 5Z" fill="#e2e2e2"/><circle cx="7.5" cy="5" r="2.8" fill="#3a3a3a"/><circle cx="8.6" cy="3.9" r="0.75" fill="#e2e2e2"/></svg>
<div class="a" style="left:674px;top:384px;width:80px;height:80px;border:1px solid #2e2e2e;background:#fff"></div>
<div class="t" style="left:763px;top:419px;font-size:12px;color:#f0f0f0"><span class="c" style="width:2em">背景</span></div>
<svg style="left:847px;top:419px" width="12" height="13" viewBox="0 0 12 13"><path d="M3.2 5.5 V3.8 A2.8 2.8 0 0 1 8.8 3.8 V5.5" stroke="#d8d8d8" stroke-width="1.3" fill="none"/><rect x="1" y="5.5" width="10" height="7" fill="none" stroke="#d8d8d8" stroke-width="1.2"/><rect x="5.2" y="8.2" width="1.6" height="1.6" fill="#d8d8d8"/></svg>
<!-- footer icons -->
<svg style="left:680px;top:558px" width="190" height="24" viewBox="680 558 190 24">
<g fill="none" stroke="#b0b0b0" stroke-width="1.2">
<path d="M692 567 H689.5 A2.8 2.8 0 0 0 689.5 572.6 H692 M695 567 H697.5 A2.8 2.8 0 0 1 697.5 572.6 H695 M690.5 569.8 H696.5"/>
<circle cx="777" cy="569.5" r="5.5"/>
<path d="M852.5 565.5 H860.5 M855 565.5 V564 H858 V565.5 M853.5 566.5 L854 575.5 H859 L859.5 566.5 M855.3 568 V574 M857.7 568 V574"/>
</g>
<g fill="#b0b0b0">
<text x="717.5" y="574" font-family="Liberation Serif" font-style="italic" font-size="14">fx</text>
<path d="M744 563.5 H756 V575.5 H744Z M750 566.3 A3.2 3.2 0 1 0 750.01 566.3Z" fill-rule="evenodd"/>
<path d="M773 573.5 A5.5 5.5 0 0 0 781 565.5Z"/>
<path d="M797 566 H802 L803 567.5 H809.5 V575 H797Z"/>
<path d="M826 564.5 H832.3 L835.8 568 V576 H826Z"/>
<path d="M729.5 576.5 H733.5 L731.5 578.5Z M776.5 576.5 H780.5 L778.5 578.5Z"/>
</g>
<path d="M832.3 564.5 V568 H835.8" fill="none" stroke="#535353" stroke-width="0.9"/>
</svg>
<!-- slider popup -->
<div class="a" style="left:766px;top:194px;width:121px;height:29px;background:#4d4d4d;border-top:1px solid #3e3e3e;border-right:1px solid #3e3e3e;border-bottom:2px solid #3a3a3a"></div>
<div class="a" style="left:778px;top:206px;width:99px;height:3px;background:#6e6e6e;border-radius:1px"></div>
<svg style="left:772px;top:203px" width="14" height="12" viewBox="0 0 14 12"><path d="M7 0.8 L12.5 6.5 V10 A1.5 1.5 0 0 1 11 11.5 H3 A1.5 1.5 0 0 1 1.5 10 V6.5Z" fill="#f4f4f4" stroke="#2a2a2a" stroke-width="0.8"/></svg>
<!-- red highlight box -->
<div class="a" style="left:762px;top:166px;width:133px;height:66px;border:4.6px solid #f5201c;border-radius:7px 7px 6px 7px"></div>
<!-- watermark -->
<div class="t" style="left:690px;top:547px;font-size:22px;letter-spacing:0.6px;font-weight:bold;color:#fff;text-shadow:1px 1px 0 #000,2px 2px 1px #000,-1px 0 1px rgba(0,0,0,0.6)"><span class="c" style="width:2em">头条</span> @<span class="c" style="width:5em">开心太难了</span></div>

</body></html>
